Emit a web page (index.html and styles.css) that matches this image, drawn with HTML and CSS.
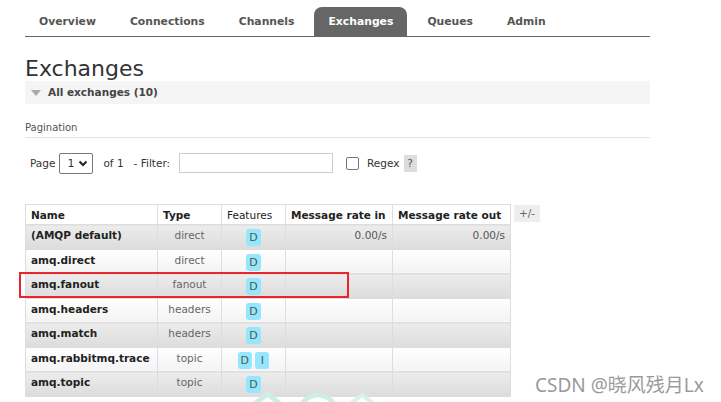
FILE: index.html
```html
<!DOCTYPE html>
<html>
<head>
<meta charset="utf-8">
<link rel="stylesheet" href="styles.css">
</head>
<body>
<div class="page">
  <nav class="tabs">
    <a class="tab">Overview</a>
    <a class="tab">Connections</a>
    <a class="tab">Channels</a>
    <a class="tab active">Exchanges</a>
    <a class="tab">Queues</a>
    <a class="tab">Admin</a>
  </nav>
  <h1 class="title">Exchanges</h1>
  <div class="section-head"><span class="tri"></span>All exchanges (10)</div>
  <div class="pag-label">Pagination</div>
  <div class="controls">
    <span>Page</span>
    <span class="select">1 <svg width="10" height="7" viewBox="0 0 10 7"><path d="M1.5 1.5 L5 5 L8.5 1.5" fill="none" stroke="#222" stroke-width="2"/></svg></span>
    <span class="of">of 1</span>
    <span>- Filter:</span>
    <span class="input"></span>
    <span class="check"></span>
    <span>Regex</span>
    <span class="help">?</span>
  </div>
  <div class="table-wrap">
    <table class="ex">
      <thead>
        <tr><th class="c-name">Name</th><th class="c-type">Type</th><th class="c-feat">Features</th><th class="c-in">Message rate in</th><th class="c-out">Message rate out</th></tr>
      </thead>
      <tbody>
        <tr class="odd"><td class="name">(AMQP default)</td><td class="type">direct</td><td class="feat"><span class="badge">D</span></td><td class="rate">0.00/s</td><td class="rate">0.00/s</td></tr>
        <tr class="even"><td class="name">amq.direct</td><td class="type">direct</td><td class="feat"><span class="badge">D</span></td><td></td><td></td></tr>
        <tr class="odd"><td class="name">amq.fanout</td><td class="type">fanout</td><td class="feat"><span class="badge">D</span></td><td></td><td></td></tr>
        <tr class="even"><td class="name">amq.headers</td><td class="type">headers</td><td class="feat"><span class="badge">D</span></td><td></td><td></td></tr>
        <tr class="odd"><td class="name">amq.match</td><td class="type">headers</td><td class="feat"><span class="badge">D</span></td><td></td><td></td></tr>
        <tr class="even"><td class="name">amq.rabbitmq.trace</td><td class="type">topic</td><td class="feat"><span class="badge">D</span> <span class="badge">I</span></td><td></td><td></td></tr>
        <tr class="odd"><td class="name">amq.topic</td><td class="type">topic</td><td class="feat"><span class="badge">D</span></td><td></td><td></td></tr>
      </tbody>
    </table>
    <span class="plusminus">+/-</span>
  </div>
</div>
<div class="highlight"></div>
<svg class="wm-logo" width="130" height="12" viewBox="0 0 130 12"><path d="M4 12 L18 2 L30 12" fill="none" stroke="#cdeee5" stroke-width="5"/><path d="M52 12 C60 0 76 0 84 12" fill="none" stroke="#cdeee5" stroke-width="5"/><path d="M100 12 L112 3 L124 12" fill="none" stroke="#d6f2eb" stroke-width="4"/></svg>
<div class="watermark">CSDN @晓风残月Lx</div>
</body>
</html>
```
FILE: styles.css
```css
html, body { margin: 0; padding: 0; background: #fff; }
body { font-family: "DejaVu Sans", Verdana, sans-serif; color: #222; position: relative; width: 721px; height: 402px; overflow: hidden; }
.page { padding: 7px 0 0 25px; width: 625px; }
.tabs { display: flex; border-bottom: 1px solid #666; height: 29px; }
.tab { font-weight: bold; font-size: 10.8px; color: #555; padding: 0 14px; margin-right: 6px; line-height: 30px; border-radius: 8px 8px 0 0; }
.tab.active { background: #666; color: #fff; }
.title { font-weight: normal; font-size: 22px; color: #333; margin: 14px 0 0 0; line-height: 36px; height: 30px; }
.section-head { background: #f5f5f5; height: 23px; line-height: 23px; font-weight: bold; font-size: 10.5px; color: #444; padding-left: 6px; display: flex; align-items: center; }
.tri { width: 0; height: 0; border-left: 5px solid transparent; border-right: 5px solid transparent; border-top: 6px solid #aaa; margin-right: 7px; }
.pag-label { font-size: 10px; color: #555; margin-top: 17px; padding-bottom: 3px; border-bottom: 1px solid #e4e4e4; line-height: 13px; }
.controls { display: flex; align-items: center; font-size: 10.5px; color: #333; margin-top: 15px; padding-left: 5px; height: 20px; }
.select { display: inline-flex; align-items: center; gap: 4px; border: 1px solid #777; border-radius: 2px; padding: 0 4px 0 7px; margin: 0 10px 0 4px; box-sizing: border-box; height: 21px; font-size: 11px; }
.of { margin-right: 10px; }
.input { width: 154px; height: 20px; border: 1px solid #ccc; box-sizing: border-box; margin-left: 9px; }
.check { width: 11px; height: 11px; border: 1px solid #777; border-radius: 2px; margin: 0 8px 0 13px; }
.help { background: #ddd; color: #555; width: 13px; height: 17px; line-height: 17px; text-align: center; margin-left: 4px; }
.table-wrap { display: flex; align-items: flex-start; margin-top: 31px; }
.ex { border-collapse: collapse; font-size: 10.5px; border: 1px solid #ddd; }
.ex th { background: #fff; border: 1px solid #ddd; padding: 0 5px; height: 19px; text-align: left; color: #222; white-space: nowrap; }
.ex th.c-feat { font-weight: normal; }
.ex td { border: 1px solid #ddd; padding: 0 5px; height: 24.5px; vertical-align: top; padding-top: 3px; box-sizing: border-box; line-height: 14px; white-space: nowrap; }
.c-name { width: 121px; }
.c-type { width: 53px; }
.c-feat { width: 53px; }
.c-in { width: 96px; }
.c-out { width: 107px; }
tr.odd td { background: linear-gradient(#ececec, #dcdcdc); }
tr.even td { background: linear-gradient(#ffffff, #f3f3f3); }
.name { font-weight: bold; color: #222; }
.type { text-align: center; color: #666; }
.feat { text-align: center; }
.feat { padding-top: 4px !important; }
.rate { text-align: right; color: #555; }
.badge { display: inline-block; background: #94e7fd; color: #555; border-radius: 3px; padding: 0 3px; line-height: 17px; font-size: 11px; min-width: 8px; }
.plusminus { background: #eee; color: #666; font-size: 10.5px; padding: 2px 5px; margin-left: 3px; margin-top: 1px; line-height: 13px; }
.highlight { position: absolute; left: 19px; top: 272px; width: 326px; height: 22px; border: 2px solid #e8262b; }
.watermark { position: absolute; left: 535px; top: 370px; font-family: "Noto Sans", "Noto Sans CJK SC", sans-serif; font-size: 19px; color: #9a9a9a; }
.wm-logo { position: absolute; left: 250px; top: 392px; }
```
